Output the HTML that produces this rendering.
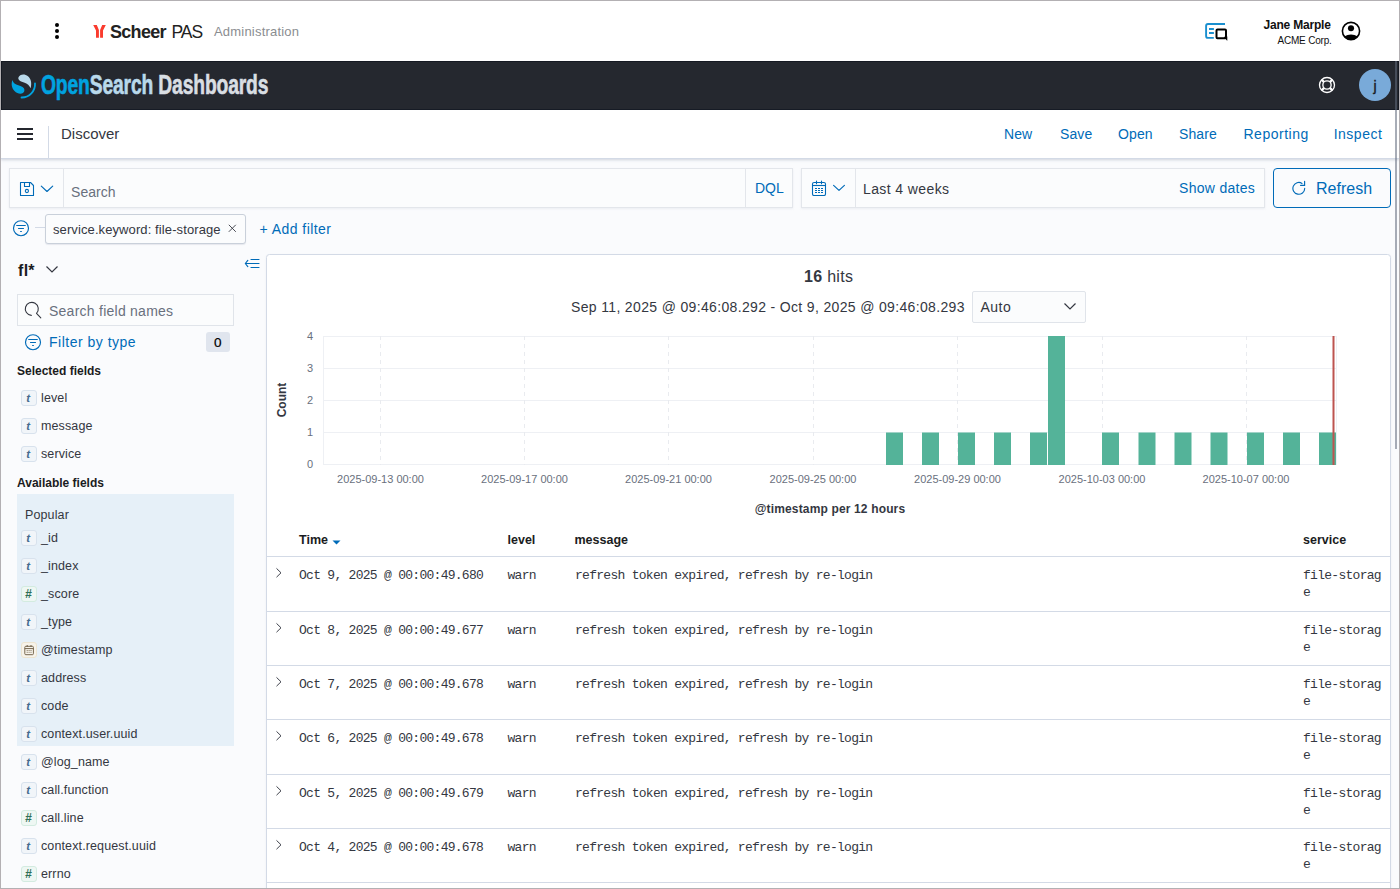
<!DOCTYPE html>
<html><head><meta charset="utf-8">
<style>
*{box-sizing:border-box;margin:0;padding:0}
html,body{width:1400px;height:889px;overflow:hidden;background:#fff}
body{font-family:"Liberation Sans",sans-serif;color:#343741;position:relative}
.a{position:absolute;white-space:nowrap}
.mono{font-family:"Liberation Mono",monospace}
#frame{position:absolute;left:0;top:0;width:1400px;height:889px;border:1px solid #b3b0b3;z-index:50;pointer-events:none}
#top{position:absolute;left:1px;top:1px;width:1398px;height:60px;background:#fff}
#dark{position:absolute;left:1px;top:61px;width:1398px;height:49px;background:#25282f;border:1px solid #151922}
#main{position:absolute;left:1px;top:110px;width:1398px;height:778px;background:#fafbfd}
#hdr{position:absolute;left:0;top:0;width:1398px;height:49px;background:#fff;border-bottom:1px solid #d3dae6;box-shadow:0 1px 2px rgba(152,162,179,.3),0 2px 3px rgba(152,162,179,.12)}
.link{color:#006bb8}
.box{position:absolute;background:#fbfcfd;border:1px solid #e3e6eb;border-radius:0}

.tok{width:15.5px;height:16px;border-radius:3px;background:#f1f5f9;border:1px solid #d8e2ed;color:#466b8f;font-size:11.5px;font-weight:bold;font-style:italic;text-align:center;line-height:15px;font-family:"Liberation Sans",sans-serif;padding-right:1px}
.tok.num{background:#eef7f3;border-color:#d3ebe0;color:#2f6f56;font-size:12px;line-height:14.5px}
.tok.date{background:#f7f3ea;border-color:#ede4d0}
.fname{font-size:12.5px;color:#343741;letter-spacing:0.12px}

.cell{font-size:13px;color:#343741;letter-spacing:-0.72px}
</style></head><body>
<div id="frame"></div>

<!-- top white header -->
<div id="top">
  <svg class="a" style="left:53px;top:21px" width="8" height="20" viewBox="0 0 8 20">
    <circle cx="3" cy="3" r="2" fill="#000"/><circle cx="3" cy="9" r="2" fill="#000"/><circle cx="3" cy="15" r="2" fill="#000"/>
  </svg>
  <svg class="a" style="left:89px;top:19px" width="20" height="22" viewBox="0 0 20 22">
    <path d="M3.2 4.9 L6.8 4.9 L8.9 10 L8.9 17.8 L6 17.8 L6 10.5 Z" fill="#fa3b2e"/>
    <path d="M15.8 4.9 L12.2 4.9 L10.1 10 L10.1 17.8 L13 17.8 L13 10.5 Z" fill="#fa3b2e"/>
  </svg>
  <div class="a" style="left:109px;top:21.3px;font-size:18px;font-weight:bold;color:#222;letter-spacing:-0.7px">Scheer</div>
  <div class="a" style="left:170.5px;top:21.2px;font-size:17.5px;color:#222;letter-spacing:-1px">PAS</div>
  <div class="a" style="left:213px;top:23.3px;font-size:13px;color:#8a8d91;letter-spacing:0.2px">Administration</div>

  <svg class="a" style="left:1199px;top:15px" width="32" height="30" viewBox="0 0 32 30">
    <path d="M25 8 H8 Q6.1 8 6.1 10 V20 Q6.1 21.9 8 21.9 H13.8" fill="none" stroke="#1a8fcf" stroke-width="1.9"/>
    <path d="M9 13 H13.9 M9 17 H13.9" stroke="#1a8fcf" stroke-width="1.8"/>
    <rect x="16.5" y="13.5" width="9.5" height="8.7" rx="1" fill="none" stroke="#000" stroke-width="2"/>
    <path d="M24.2 21.2 L27 24.3 L27 20.5Z" fill="#000" stroke="#000" stroke-width="0.6" stroke-linejoin="round"/>
  </svg>
  <div class="a" style="left:1262.5px;top:16.6px;font-size:12px;font-weight:bold;color:#111;letter-spacing:-0.2px">Jane Marple</div>
  <div class="a" style="left:1276.5px;top:33.8px;font-size:10px;color:#111;letter-spacing:-0.2px">ACME Corp.</div>
  <svg class="a" style="left:1335px;top:15px" width="30" height="30" viewBox="0 0 30 30">
    <circle cx="15" cy="15" r="8.6" fill="none" stroke="#000" stroke-width="1.6"/>
    <circle cx="15" cy="12.3" r="3.05" fill="#000"/>
    <path d="M8.1 20.4 Q15 16.6 21.9 20.4 A8.6 8.6 0 0 1 8.1 20.4 Z" fill="#000"/>
  </svg>
</div>

<!-- dark opensearch bar -->
<div id="dark">
  <svg class="a" style="left:6px;top:8px" width="32" height="32" viewBox="0 0 32 32">
    <path d="M11 6.5 C12.5 4 17 3.8 20 6.2 C23 8.7 24 13 22.6 18.3 C21.5 15.5 19.5 13.8 16 12.5 C13 11.5 10.5 10.5 10.3 8.5 C10.2 7.8 10.5 7.1 11 6.5 Z" fill="#b9d9eb"/>
    <path d="M4.5 10 C3 13.5 3.5 18 6.5 21 C9 23.5 12.5 24.5 15 23 C17 21.5 17 18.5 14.5 17 C12 15.5 8.5 15 6.5 13.5 C5.5 12.7 4.8 11.5 4.5 10 Z" fill="#00a3e0"/>
    <path d="M27 13.3 A13.3 13.3 0 0 1 13.5 27.5" fill="none" stroke="#00a3e0" stroke-width="1.8" stroke-linecap="round"/>
  </svg>
  <div class="a" style="left:38.5px;top:6.6px;font-size:28px;font-weight:bold;transform:scaleX(0.688);transform-origin:0 0;letter-spacing:-0.2px;-webkit-text-stroke:0.6px currentColor"><span style="color:#00a3e0;-webkit-text-stroke:0.6px #00a3e0">Open</span><span style="color:#b9d9eb;-webkit-text-stroke:0.6px #b9d9eb">Search</span><span style="color:#d9dee3;-webkit-text-stroke:0.6px #d9dee3"> Dashboards</span></div>
  <svg class="a" style="left:1315px;top:13px" width="20" height="20" viewBox="0 0 20 20">
    <circle cx="10" cy="10" r="7.5" fill="none" stroke="#fff" stroke-width="1.35"/>
    <circle cx="10" cy="10" r="4.15" fill="none" stroke="#fff" stroke-width="1.35"/>
    <path d="M4.7 4.7 L7.1 7.1 M15.3 4.7 L12.9 7.1 M4.7 15.3 L7.1 12.9 M15.3 15.3 L12.9 12.9" stroke="#fff" stroke-width="2.3"/>
  </svg>
  <div class="a" style="left:1357px;top:7px;width:32px;height:32px;border-radius:50%;background:#79aad9"></div>
  <div class="a" style="left:1371.5px;top:16px;font-size:14px;color:#1a1c21;-webkit-text-stroke:0.4px #1a1c21">j</div>
</div>

<div id="main">
  <div id="hdr">
    <div class="a" style="left:16px;top:18px;width:16px;height:2px;background:#25282f"></div>
    <div class="a" style="left:16px;top:23px;width:16px;height:2px;background:#25282f"></div>
    <div class="a" style="left:16px;top:28px;width:16px;height:2px;background:#25282f"></div>
    <div class="a" style="left:47px;top:16px;width:1px;height:32px;background:#d3dae6"></div>
    <div class="a" style="left:60px;top:15px;font-size:15px;color:#343741">Discover</div>
    <div class="a link" style="left:1003px;top:16px;font-size:14px;letter-spacing:0.1px">New</div>
    <div class="a link" style="left:1059px;top:16px;font-size:14px;letter-spacing:0.1px">Save</div>
    <div class="a link" style="left:1117px;top:16px;font-size:14px;letter-spacing:0.1px">Open</div>
    <div class="a link" style="left:1178px;top:16px;font-size:14px;letter-spacing:0.1px">Share</div>
    <div class="a link" style="left:1242.5px;top:16px;font-size:14px;letter-spacing:0.5px">Reporting</div>
    <div class="a link" style="left:1332.7px;top:16px;font-size:14px;letter-spacing:0.5px">Inspect</div>
  </div>

  <!-- query bar -->
  <div class="box" style="left:8px;top:58px;width:784px;height:40px;box-shadow:0 1px 2px rgba(152,162,179,.15)"></div>
  <svg class="a" style="left:18px;top:71px" width="16" height="16" viewBox="0 0 16 16">
    <path d="M1.5 1.5 H11.5 L14.5 4.5 V14.5 H1.5 Z" fill="none" stroke="#006bb8" stroke-width="1.1" stroke-linejoin="round"/>
    <path d="M5.5 1.5 V5.5 H10.5 V1.5" fill="none" stroke="#006bb8" stroke-width="1.1" stroke-linejoin="round"/>
    <circle cx="7.9" cy="10" r="1.6" fill="none" stroke="#006bb8" stroke-width="1.1"/>
  </svg>
  <svg class="a" style="left:39px;top:74px" width="14" height="10" viewBox="0 0 14 10"><path d="M1.3 2.2 L7 7.5 L12.7 2.2" fill="none" stroke="#006bb8" stroke-width="1.15" stroke-linecap="round" stroke-linejoin="round"/></svg>
  <div class="a" style="left:62px;top:59px;width:1px;height:38px;background:#e3e6eb"></div>
  <div class="a" style="left:70px;top:74px;font-size:14px;color:#69707d;letter-spacing:0.05px">Search</div>
  <div class="a" style="left:744px;top:59px;width:1px;height:38px;background:#e3e6eb"></div>
  <div class="a link" style="left:754px;top:70px;font-size:14px">DQL</div>

  <div class="box" style="left:800px;top:58px;width:464px;height:40px;box-shadow:0 1px 2px rgba(152,162,179,.15)"></div>
  <svg class="a" style="left:810px;top:70px" width="16" height="16" viewBox="0 0 16 16">
    <rect x="1.5" y="2.5" width="13" height="13" rx="1.6" fill="none" stroke="#006bb8" stroke-width="1.1"/>
    <path d="M1.5 5.5 H14.5" stroke="#006bb8" stroke-width="1.1"/>
    <path d="M5.5 1 V3.8 M10.5 1 V3.8" stroke="#006bb8" stroke-width="1.1" stroke-linecap="round"/>
    <path d="M4 8.5h2M7 8.5h2M10 8.5h2M4 10.5h2M7 10.5h2M10 10.5h2M4 12.5h2M7 12.5h2M10 12.5h2" stroke="#006bb8" stroke-width="1.05"/>
  </svg>
  <svg class="a" style="left:831px;top:73px" width="14" height="10" viewBox="0 0 14 10"><path d="M1.6 2.3 L7 7.4 L12.4 2.3" fill="none" stroke="#006bb8" stroke-width="1.15" stroke-linecap="round" stroke-linejoin="round"/></svg>
  <div class="a" style="left:854px;top:59px;width:1px;height:38px;background:#e3e6eb"></div>
  <div class="a" style="left:862px;top:71px;font-size:14px;color:#343741;letter-spacing:0.4px">Last 4 weeks</div>
  <div class="a link" style="left:1178px;top:70px;font-size:14px;letter-spacing:0.3px">Show dates</div>

  <div class="a" style="left:1272px;top:58px;width:118px;height:40px;border:1px solid #006bb8;border-radius:4px;background:#fafbfd"></div>
  <svg class="a" style="left:1291px;top:70px" width="16" height="16" viewBox="0 0 16 16">
    <path d="M10 3.4 A5.9 5.9 0 1 0 12.7 8.4" fill="none" stroke="#006bb8" stroke-width="1.15" stroke-linecap="round"/>
    <path d="M12.6 1.3 V5.4 H8.6" fill="none" stroke="#006bb8" stroke-width="1.15" stroke-linecap="round"/>
  </svg>
  <div class="a link" style="left:1315px;top:70px;font-size:16px">Refresh</div>

  <!-- filter row -->
  <svg class="a" style="left:11px;top:109px" width="18" height="18" viewBox="0 0 18 18">
    <circle cx="9" cy="9.2" r="7.5" fill="none" stroke="#006bb8" stroke-width="1.15"/>
    <path d="M4.7 6.5 H13.3 M6.5 9.5 H11.5 M8.6 12.5 H9.4" stroke="#006bb8" stroke-width="1.15" stroke-linecap="round"/>
  </svg>
  <div class="a" style="left:34px;top:117px;width:10px;height:1px;background:#d3dae6"></div>
  <div class="a" style="left:44px;top:104px;width:201px;height:30px;background:#fbfcfd;border:1px solid #c9d0da;border-radius:3px;box-shadow:0 1px 1px rgba(152,162,179,.2)"></div>
  <div class="a" style="left:52px;top:112px;font-size:13px;color:#343741;letter-spacing:0.1px">service.keyword: file-storage</div>
  <svg class="a" style="left:226px;top:113px" width="10" height="10" viewBox="0 0 10 10"><path d="M1.8 1.8 L8.8 8.8 M8.8 1.8 L1.8 8.8" stroke="#343741" stroke-width="0.9"/></svg>
  <div class="a link" style="left:258.5px;top:111px;font-size:14px;letter-spacing:0.45px">+ Add filter</div>

</div>


<!-- sidebar -->
<div class="a" style="left:18px;top:261.8px;font-size:16px;font-weight:bold;color:#1a1c21;letter-spacing:0.3px">fl*</div>
<svg class="a" style="left:45px;top:265px" width="14" height="9" viewBox="0 0 14 9"><path d="M1.5 1.5 L7 7 L12.5 1.5" fill="none" stroke="#343741" stroke-width="1.2"/></svg>
<svg class="a" style="left:240px;top:254px" width="24" height="20" viewBox="0 0 24 20"><path d="M11 5.5 H19 M5.6 9.5 H19 M11 13.5 H19 M7.8 6.4 L5.3 9.5 L7.8 12.6" fill="none" stroke="#006bb8" stroke-width="1.15" stroke-linecap="round" stroke-linejoin="round"/></svg>
<div class="a" style="left:17px;top:294px;width:217px;height:32px;background:#fbfcfd;border:1px solid #e0e4ea"></div>
<svg class="a" style="left:24px;top:301px" width="18" height="18" viewBox="0 0 18 18"><path d="M12.5 12.4 A6.5 6.5 0 1 0 7.3 14.4 M12.5 12.4 L16.8 16.8" fill="none" stroke="#343741" stroke-width="1.1" stroke-linecap="round"/></svg>
<div class="a" style="left:49px;top:303px;font-size:14px;color:#69707d;letter-spacing:0.25px">Search field names</div>
<svg class="a" style="left:24px;top:333px" width="18" height="18" viewBox="0 0 18 18">
  <circle cx="9" cy="9.2" r="7.5" fill="none" stroke="#006bb8" stroke-width="1.15"/>
  <path d="M4.7 6.5 H13.3 M6.5 9.5 H11.5 M8.6 12.5 H9.4" stroke="#006bb8" stroke-width="1.15" stroke-linecap="round"/>
</svg>
<div class="a link" style="left:49px;top:333.5px;font-size:14px;letter-spacing:0.5px">Filter by type</div>
<div class="a" style="left:206px;top:332px;width:24px;height:20px;border-radius:3px;background:#e0e5ee"></div>
<div class="a" style="left:214px;top:334.6px;font-size:13.5px;color:#000;-webkit-text-stroke:0.2px #000">0</div>
<div class="a" style="left:17px;top:363.6px;font-size:12px;font-weight:bold;color:#1a1c21">Selected fields</div>
<div class="a tok" style="left:21px;top:389.6px">t</div><div class="a fname" style="left:41px;top:390.5px">level</div>
<div class="a tok" style="left:21px;top:417.6px">t</div><div class="a fname" style="left:41px;top:418.5px">message</div>
<div class="a tok" style="left:21px;top:445.6px">t</div><div class="a fname" style="left:41px;top:446.5px">service</div>
<div class="a" style="left:17px;top:475.6px;font-size:12px;font-weight:bold;color:#1a1c21">Available fields</div>
<div class="a" style="left:17px;top:494px;width:217px;height:252px;background:#e6f0f8"></div>
<div class="a fname" style="left:25px;top:508px">Popular</div>
<div class="a tok" style="left:21px;top:530.2px">t</div><div class="a fname" style="left:41px;top:531.1px">_id</div>
<div class="a tok" style="left:21px;top:558.2px">t</div><div class="a fname" style="left:41px;top:559.1px">_index</div>
<div class="a tok num" style="left:21px;top:586.2px">#</div><div class="a fname" style="left:41px;top:587.1px">_score</div>
<div class="a tok" style="left:21px;top:614.2px">t</div><div class="a fname" style="left:41px;top:615.1px">_type</div>
<div class="a tok date" style="left:21px;top:642.2px"><svg width="14" height="14" viewBox="0 0 14 14" style="position:absolute;left:0;top:0"><rect x="2.8" y="3.3" width="8.6" height="8.4" rx="1" fill="none" stroke="#75664f" stroke-width="1"/><path d="M2.8 5.6H11.4M5.2 2V4M9 2V4" stroke="#75664f" stroke-width="1"/><path d="M5.2 7V10.5M7.1 7V10.5M9 7V10.5" stroke="#75664f" stroke-width="0.9" stroke-dasharray="1 0.8"/></svg></div><div class="a fname" style="left:41px;top:643.1px">@timestamp</div>
<div class="a tok" style="left:21px;top:670.2px">t</div><div class="a fname" style="left:41px;top:671.1px">address</div>
<div class="a tok" style="left:21px;top:698.2px">t</div><div class="a fname" style="left:41px;top:699.1px">code</div>
<div class="a tok" style="left:21px;top:726.2px">t</div><div class="a fname" style="left:41px;top:727.1px">context.user.uuid</div>
<div class="a tok" style="left:21px;top:754.2px">t</div><div class="a fname" style="left:41px;top:755.1px">@log_name</div>
<div class="a tok" style="left:21px;top:782.2px">t</div><div class="a fname" style="left:41px;top:783.1px">call.function</div>
<div class="a tok num" style="left:21px;top:810.2px">#</div><div class="a fname" style="left:41px;top:811.1px">call.line</div>
<div class="a tok" style="left:21px;top:838.2px">t</div><div class="a fname" style="left:41px;top:839.1px">context.request.uuid</div>
<div class="a tok num" style="left:21px;top:866.2px">#</div><div class="a fname" style="left:41px;top:867.1px">errno</div>

<!-- chart panel -->
<div class="a" style="left:266px;top:254px;width:1125px;height:700px;background:#fff;border:1px solid #d3dae6;border-radius:3.5px;box-shadow:0 1px 2px rgba(152,162,179,.15)"></div>
<div class="a" style="left:804px;top:267.5px;font-size:16px;color:#343741;letter-spacing:0.3px"><b>16</b> hits</div>
<div class="a" style="left:571px;top:299.1px;font-size:14px;color:#343741;letter-spacing:0.345px">Sep 11, 2025 @ 09:46:08.292 - Oct 9, 2025 @ 09:46:08.293</div>
<div class="a" style="left:972px;top:291px;width:114px;height:32px;background:#fbfcfd;border:1px solid #e0e4ea;border-radius:2px"></div>
<div class="a" style="left:980.5px;top:299px;font-size:14px;color:#343741;letter-spacing:0.5px">Auto</div>
<svg class="a" style="left:1063px;top:302px" width="14" height="9" viewBox="0 0 14 9"><path d="M1.5 1.5 L7 7 L12.5 1.5" fill="none" stroke="#343741" stroke-width="1.2"/></svg>
<svg class="a" style="left:266px;top:320px" width="1125" height="200" viewBox="266 320 1125 200">
  <g stroke="#eef0f4" stroke-width="1">
    <path d="M323 336.5 H1337 M323 368.5 H1337 M323 400.5 H1337 M323 432.5 H1337 M323 464.5 H1337 M323.5 336 V465 M1336.5 336 V465"/>
  </g>
  <g stroke="#e9ebef" stroke-width="1" stroke-dasharray="4 4">
    <path d="M380.5 336 V465 M524.5 336 V465 M668.5 336 V465 M813.5 336 V465 M957.5 336 V465 M1102.5 336 V465 M1246.5 336 V465"/>
  </g>
  <g fill="#54b399">
    <rect x="886" y="432.5" width="17" height="32.5"/>
    <rect x="922" y="432.5" width="17" height="32.5"/>
    <rect x="958" y="432.5" width="17" height="32.5"/>
    <rect x="994" y="432.5" width="17" height="32.5"/>
    <rect x="1030" y="432.5" width="17" height="32.5"/>
    <rect x="1048" y="336" width="17" height="129"/>
    <rect x="1102" y="432.5" width="17" height="32.5"/>
    <rect x="1138.5" y="432.5" width="17" height="32.5"/>
    <rect x="1174.5" y="432.5" width="17" height="32.5"/>
    <rect x="1210.5" y="432.5" width="17" height="32.5"/>
    <rect x="1247" y="432.5" width="17" height="32.5"/>
    <rect x="1283" y="432.5" width="17" height="32.5"/>
    <rect x="1319" y="432.5" width="17" height="32.5"/>
  </g>
  <rect x="1332.5" y="336" width="2" height="129" fill="#bd5450"/>
  <g font-family="Liberation Sans" font-size="11" fill="#69707d" text-anchor="end">
    <text x="313" y="340">4</text><text x="313" y="372">3</text><text x="313" y="404">2</text><text x="313" y="436">1</text><text x="313" y="468">0</text>
  </g>
  <g font-family="Liberation Sans" font-size="11" fill="#69707d" text-anchor="middle">
    <text x="380.5" y="483">2025-09-13 00:00</text>
    <text x="524.5" y="483">2025-09-17 00:00</text>
    <text x="668.5" y="483">2025-09-21 00:00</text>
    <text x="813" y="483">2025-09-25 00:00</text>
    <text x="957.5" y="483">2025-09-29 00:00</text>
    <text x="1102" y="483">2025-10-03 00:00</text>
    <text x="1246" y="483">2025-10-07 00:00</text>
  </g>
  <text x="285.5" y="400" transform="rotate(-90 285.5 400)" font-family="Liberation Sans" font-size="12" font-weight="bold" fill="#343741" text-anchor="middle">Count</text>
  <text x="830" y="513.2" font-family="Liberation Sans" font-size="12" font-weight="bold" fill="#343741" text-anchor="middle" letter-spacing="0.15">@timestamp per 12 hours</text>
</svg>

<!-- table -->
<div class="a" style="left:299px;top:533px;font-size:12.5px;font-weight:bold;color:#1a1c21">Time</div>
<svg class="a" style="left:332px;top:540px" width="9" height="5" viewBox="0 0 9 5"><path d="M0.5 0.5 H8.5 L4.5 4.5Z" fill="#006bb8"/></svg>
<div class="a" style="left:507.5px;top:533px;font-size:12.5px;font-weight:bold;color:#1a1c21">level</div>
<div class="a" style="left:574.5px;top:533px;font-size:12.5px;font-weight:bold;color:#1a1c21">message</div>
<div class="a" style="left:1303px;top:533px;font-size:12.5px;font-weight:bold;color:#1a1c21">service</div>
<div class="a" style="left:267px;top:556px;width:1123px;height:1px;background:#d3dae6"></div>
<svg class="a" style="left:275px;top:567.4px" width="8" height="11" viewBox="0 0 8 11"><path d="M1.5 1.4 L6 5.8 L1.5 10.2" fill="none" stroke="#343741" stroke-width="0.95"/></svg>
<div class="a mono cell" style="left:299px;top:568.0px">Oct 9, 2025 @ 00:00:49.680</div>
<div class="a mono cell" style="left:507.5px;top:568.0px">warn</div>
<div class="a mono cell" style="left:575px;top:568.0px">refresh token expired, refresh by re-login</div>
<div class="a mono cell" style="left:1303px;line-height:17px;top:567.2px">file-storag<br>e</div>
<div class="a" style="left:267px;top:611px;width:1123px;height:1px;background:#d3dae6"></div>
<svg class="a" style="left:275px;top:622.4px" width="8" height="11" viewBox="0 0 8 11"><path d="M1.5 1.4 L6 5.8 L1.5 10.2" fill="none" stroke="#343741" stroke-width="0.95"/></svg>
<div class="a mono cell" style="left:299px;top:623.0px">Oct 8, 2025 @ 00:00:49.677</div>
<div class="a mono cell" style="left:507.5px;top:623.0px">warn</div>
<div class="a mono cell" style="left:575px;top:623.0px">refresh token expired, refresh by re-login</div>
<div class="a mono cell" style="left:1303px;line-height:17px;top:622.2px">file-storag<br>e</div>
<div class="a" style="left:267px;top:665px;width:1123px;height:1px;background:#d3dae6"></div>
<svg class="a" style="left:275px;top:676.4px" width="8" height="11" viewBox="0 0 8 11"><path d="M1.5 1.4 L6 5.8 L1.5 10.2" fill="none" stroke="#343741" stroke-width="0.95"/></svg>
<div class="a mono cell" style="left:299px;top:677.0px">Oct 7, 2025 @ 00:00:49.678</div>
<div class="a mono cell" style="left:507.5px;top:677.0px">warn</div>
<div class="a mono cell" style="left:575px;top:677.0px">refresh token expired, refresh by re-login</div>
<div class="a mono cell" style="left:1303px;line-height:17px;top:676.2px">file-storag<br>e</div>
<div class="a" style="left:267px;top:719px;width:1123px;height:1px;background:#d3dae6"></div>
<svg class="a" style="left:275px;top:730.4px" width="8" height="11" viewBox="0 0 8 11"><path d="M1.5 1.4 L6 5.8 L1.5 10.2" fill="none" stroke="#343741" stroke-width="0.95"/></svg>
<div class="a mono cell" style="left:299px;top:731.0px">Oct 6, 2025 @ 00:00:49.678</div>
<div class="a mono cell" style="left:507.5px;top:731.0px">warn</div>
<div class="a mono cell" style="left:575px;top:731.0px">refresh token expired, refresh by re-login</div>
<div class="a mono cell" style="left:1303px;line-height:17px;top:730.2px">file-storag<br>e</div>
<div class="a" style="left:267px;top:774px;width:1123px;height:1px;background:#d3dae6"></div>
<svg class="a" style="left:275px;top:785.4px" width="8" height="11" viewBox="0 0 8 11"><path d="M1.5 1.4 L6 5.8 L1.5 10.2" fill="none" stroke="#343741" stroke-width="0.95"/></svg>
<div class="a mono cell" style="left:299px;top:786.0px">Oct 5, 2025 @ 00:00:49.679</div>
<div class="a mono cell" style="left:507.5px;top:786.0px">warn</div>
<div class="a mono cell" style="left:575px;top:786.0px">refresh token expired, refresh by re-login</div>
<div class="a mono cell" style="left:1303px;line-height:17px;top:785.2px">file-storag<br>e</div>
<div class="a" style="left:267px;top:828px;width:1123px;height:1px;background:#d3dae6"></div>
<svg class="a" style="left:275px;top:839.4px" width="8" height="11" viewBox="0 0 8 11"><path d="M1.5 1.4 L6 5.8 L1.5 10.2" fill="none" stroke="#343741" stroke-width="0.95"/></svg>
<div class="a mono cell" style="left:299px;top:840.0px">Oct 4, 2025 @ 00:00:49.678</div>
<div class="a mono cell" style="left:507.5px;top:840.0px">warn</div>
<div class="a mono cell" style="left:575px;top:840.0px">refresh token expired, refresh by re-login</div>
<div class="a mono cell" style="left:1303px;line-height:17px;top:839.2px">file-storag<br>e</div>
<div class="a" style="left:267px;top:882px;width:1123px;height:1px;background:#d3dae6"></div>
<svg class="a" style="left:275px;top:893.4px" width="8" height="11" viewBox="0 0 8 11"><path d="M1.5 1.4 L6 5.8 L1.5 10.2" fill="none" stroke="#343741" stroke-width="0.95"/></svg>
<div class="a mono cell" style="left:299px;top:894.0px">Oct 3, 2025 @ 00:00:49.678</div>
<div class="a mono cell" style="left:507.5px;top:894.0px">warn</div>
<div class="a mono cell" style="left:575px;top:894.0px">refresh token expired, refresh by re-login</div>
<div class="a mono cell" style="left:1303px;line-height:17px;top:893.2px">file-storag<br>e</div>
<div class="a" style="left:267px;top:937px;width:1123px;height:1px;background:#d3dae6"></div>
<div class="a" style="left:1395px;top:61px;width:2.2px;height:388px;background:rgba(96,106,124,.55);z-index:40"></div>
</body></html>
